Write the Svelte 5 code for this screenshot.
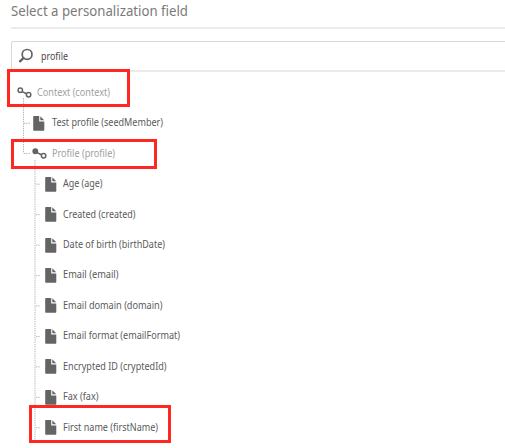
<script>
  const nodes = [
    { text: 'Context (context)', width: 73, level: 0, type: 'link' },
    { text: 'Test profile (seedMember)', width: 111, level: 1, type: 'file' },
    { text: 'Profile (profile)', width: 63, level: 1, type: 'linkFilled' },
    { text: 'Age (age)', width: 39.5, level: 2, type: 'file' },
    { text: 'Created (created)', width: 72.5, level: 2, type: 'file' },
    { text: 'Date of birth (birthDate)', width: 102, level: 2, type: 'file' },
    { text: 'Email (email)', width: 55.5, level: 2, type: 'file' },
    { text: 'Email domain (domain)', width: 99.5, level: 2, type: 'file' },
    { text: 'Email format (emailFormat)', width: 117, level: 2, type: 'file' },
    { text: 'Encrypted ID (cryptedId)', width: 103.5, level: 2, type: 'file' },
    { text: 'Fax (fax)', width: 35.5, level: 2, type: 'file' },
    { text: 'First name (firstName)', width: 95, level: 2, type: 'file' }
  ];
</script>

<main>
  <header>
    <svg class="title" width="260" height="26" role="heading" aria-level="1">
      <text x="0" y="15.8" textLength="177" lengthAdjust="spacingAndGlyphs">Select a personalization field</text>
    </svg>
  </header>
  <div class="search">
    <svg class="lens" width="16" height="16" viewBox="0 0 16 16">
      <circle cx="9.1" cy="6.4" r="4.9" fill="none" stroke="#626262" stroke-width="1.7" />
      <path d="M5.5 10 2 13.3" stroke="#626262" stroke-width="2.4" stroke-linecap="round" />
    </svg>
    <svg class="label" width="60" height="28">
      <text x="0" y="18" textLength="27" lengthAdjust="spacingAndGlyphs">profile</text>
    </svg>
  </div>
  <div class="tree">
    {#each nodes as node}
      <div class="row level{node.level}" class:muted={node.type !== 'file'}>
        {#if node.type === 'file'}
          <svg class="file" width="12" height="17" viewBox="0 -2 12 17">
            <path d="M.9 0H6.2V5.4H11.3V13.9Q11.3 14.7 10.5 14.7H.9Q.2 14.7 .2 13.9V.8Q.2 0 .9 0Z" fill="#646464" />
            <path d="M7.3.2 11.2 4.2H7.3Z" fill="#646464" />
          </svg>
        {:else}
          <svg class="link" width="15" height="14" viewBox="0 -2 15 14">
            <path d="M5 4.6 9.5 6.8" stroke="#646464" stroke-width="1.6" />
            <circle cx="3.3" cy="3.3" r="2.2" fill={node.type === 'linkFilled' ? '#646464' : 'none'} stroke="#646464" stroke-width="1.5" />
            <circle cx="11.6" cy="7.7" r="2.2" fill="none" stroke="#646464" stroke-width="1.5" />
          </svg>
        {/if}
        <svg class="label" width="180" height="28">
          <text x="0" y="18" textLength={node.width} lengthAdjust="spacingAndGlyphs">{node.text}</text>
        </svg>
      </div>
    {/each}
    <svg class="guides" width="60" height="372" viewBox="0 76 60 372">
      <path d="M23.5 98V153.5" />
      <path d="M35 160V441" />
      <path d="M24 123.2H30M24 153.5H30" />
      {#each Array(9) as _, i}
        <path d="M36 {184.2 + i * 30.45}h4.5" />
      {/each}
    </svg>
  </div>
  <i class="mark context"></i>
  <i class="mark profile"></i>
  <i class="mark first"></i>
</main>

<style>
  :global(body) { margin: 0; background: #fff; }
  main { position: relative; width: 505px; height: 448px; overflow: hidden; background: #fff; }
  svg { display: block; flex: none; overflow: visible; }
  text { font-family: "Noto Sans", sans-serif; }
  header { box-sizing: border-box; height: 29px; margin-left: 11px; border-bottom: 2px solid #ebebeb; }
  .title text { font-size: 14.7px; fill: #7a7a7a; }
  .search {
    box-sizing: border-box; height: 31px; margin: 12px 0 0 11px; padding-left: 6px;
    display: flex; align-items: center;
    border: 1px solid #d8d8d8; border-right: 0; border-bottom: 2px solid #ebebeb; border-radius: 2px 0 0 2px;
  }
  .search .label { margin-left: 6.5px; }
  .label text { font-size: 10.6px; fill: #5a5a5a; }
  .search .label text { fill: #484848; }
  .tree { position: relative; padding-top: 4.6px; }
  .row { display: flex; align-items: center; height: 30.45px; }
  .level0 { padding-left: 17px; }
  .level1 { padding-left: 33px; }
  .level2 { padding-left: 44.5px; }
  .level1.muted { padding-left: 31.5px; }
  .file + .label { margin-left: 6.6px; }
  .level1 .file + .label { margin-left: 7px; }
  .link + .label { margin-left: 5.4px; }
  .muted .label text { fill: #a0a0a0; }
  .guides { position: absolute; left: 0; top: 4px; }
  .guides path { fill: none; stroke: #b4b4b4; stroke-width: 1; stroke-dasharray: 1.3 1; }
  .mark { position: absolute; box-sizing: border-box; border: 3px solid #ff2722; }
  .context { left: 7px; top: 69px; width: 123px; height: 37.5px; }
  .profile { left: 11px; top: 139px; width: 146px; height: 30px; }
  .first { left: 29px; top: 405px; width: 142px; height: 38px; }
</style>
